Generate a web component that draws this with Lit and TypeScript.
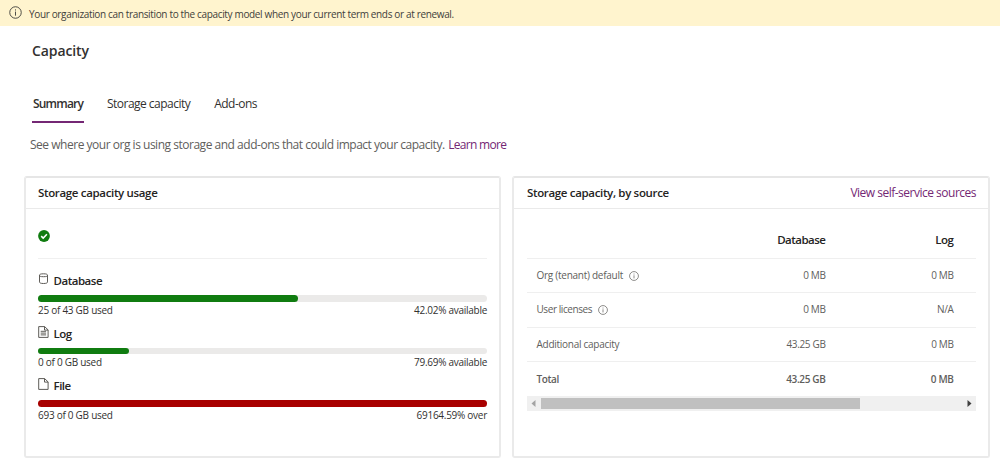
import { LitElement, html, css, svg } from "lit";
import { customElement } from "lit/decorators.js";

interface Usage { name: string; icon: unknown; used: string; state: string; share: number; over?: boolean; }

const databaseIcon = svg`<path d="M1.5 2.3c0-1 1-1.5 4-1.5s4 .5 4 1.5-1 1.4-4 1.4-4-.4-4-1.4v6.6c0 1 1 1.6 4 1.6s4-.6 4-1.6V2.3"/>`;
const fileIcon = svg`<path d="M.7.6h5.9l3.5 3.3v7.5H.7zM6.5.6v3.5h3.6"/>`;
const logIcon = svg`${fileIcon}<path d="M2.7 5.3h5.4M2.7 7.1h5.4M2.7 8.9h5.4"/>`;

const usages: Usage[] = [
  { name: "Database", icon: databaseIcon, used: "25 of 43 GB used", state: "42.02% available", share: 57.98 },
  { name: "Log", icon: logIcon, used: "0 of 0 GB used", state: "79.69% available", share: 20.31 },
  { name: "File", icon: fileIcon, used: "693 of 0 GB used", state: "69164.59% over", share: 100, over: true },
];

const rows = [
  { label: "Org (tenant) default", info: true, database: "0 MB", log: "0 MB" },
  { label: "User licenses", info: true, database: "0 MB", log: "N/A" },
  { label: "Additional capacity", info: false, database: "43.25 GB", log: "0 MB" },
  { label: "Total", info: false, database: "43.25 GB", log: "0 MB", total: true },
];

const info = () => html`<svg viewBox="0 0 14 14" fill="none" stroke="currentColor">
  <circle cx="7" cy="7" r="6.2"/><path d="M7 6v4.4M7 3.6v1.3"/></svg>`;

@customElement("app-root")
export class AppRoot extends LitElement {
  static styles = css`
    :host { display: block; height: 463px; overflow: hidden; background: #fff; color: #323130;
      font: 12px/18px "Open Sans", "Noto Sans", sans-serif; letter-spacing: -0.5px; white-space: nowrap; }
    * { box-sizing: border-box; }
    svg { display: block; flex: none; }
    a { color: #742774; text-decoration: none; }
    .banner { height: 26px; display: flex; align-items: center; gap: 7px; padding: 1px 0 0 9px;
      background: #fff4ce; color: #41403b; font-size: 10px; letter-spacing: -0.345px; }
    .banner svg { width: 13px; height: 13px; margin-top: -2px; }
    h1 { margin: 14px 0 0 32px; font-size: 14px; line-height: 22px; font-weight: 600; letter-spacing: -0.1px; }
    .tabs { display: flex; gap: 22px; height: 29px; margin: 32px 0 0 32px; }
    .tab { padding: 1px 1px 0; letter-spacing: -0.52px; }
    .tab.active { width: 52px; border-bottom: 2px solid #742774; font-weight: 600; letter-spacing: -0.8px; }
    .intro { margin: 13px 0 0 30px; height: 18px; color: #605e5c; letter-spacing: -0.48px; }
    .intro a { letter-spacing: -0.7px; margin-left: 1px; }
    .cards { display: grid; grid-template-columns: 477px 478px; gap: 11px; margin: 22px 0 0 24px; }
    .card { height: 282px; border: 2px solid #eaeaea; border-top-color: #e6e6e6; border-radius: 3px; }
    .head { height: 31px; display: flex; align-items: center; justify-content: space-between;
      padding: 0 12px; border-bottom: 1px solid #eaeaea; }
    .head b { font-size: 11.5px; font-weight: 600; color: #252423; letter-spacing: -0.34px; }
    .card.sources .head { padding-left: 13px; }
    .status { height: 50px; margin: 0 12px; padding-top: 21px; border-bottom: 1px solid #f0f0f0; }
    .status svg { width: 12px; height: 12px; }
    .usages { padding: 13px 12px 0; }
    .usage { height: 52.5px; }
    .name { display: flex; gap: 4.5px; height: 23px; font-size: 11.5px; font-weight: 600; color: #252423; letter-spacing: -0.48px; }
    .name svg { width: 11px; height: 12px; margin-top: 1px; }
    .track { height: 6.5px; border-radius: 4px; background: #ebeae9; }
    .fill { height: 100%; border-radius: 4px; background: #107c10; }
    .fill.over { background: #a80000; }
    .notes { display: flex; justify-content: space-between; font-size: 10px; line-height: 17px; letter-spacing: -0.27px; color: #323130; }
    .source { padding: 0 12px 0 13px; }
    .row { display: grid; grid-template-columns: 160px 129px 128px; padding: 0 21px 1px 9.5px; height: 34.3px;
      align-items: center; border-bottom: 1px solid #efefef; font-size: 10px; color: #605e5c; letter-spacing: -0.27px; }
    .row.header { height: 50px; padding-top: 14px; font-size: 11.5px; font-weight: 600; color: #252423; }
    .row.header .num { letter-spacing: -0.5px; }
    .row.total { border: 0; font-weight: 600; letter-spacing: -0.4px; }
    .label { display: flex; align-items: center; gap: 6px; }
    .row:nth-child(3) .label { letter-spacing: -0.42px; }
    .label svg { width: 10px; height: 10px; margin-top: 1px; }
    .num { text-align: right; letter-spacing: -0.35px; }
    .scroll { display: flex; align-items: center; justify-content: space-between; height: 15px; background: #f0f0f0; padding: 0 4px; }
    .scroll svg { width: 5px; height: 7px; }
    .lane { flex: 1; padding: 0 5px; }
    .thumb { width: 319px; height: 11px; background: #c0c0c0; }
  `;

  render() {
    return html`
      <div class="banner">${info()}<span>Your organization can transition to the capacity model when your current term ends or at renewal.</span></div>
      <h1>Capacity</h1>
      <nav class="tabs">
        <div class="tab active">Summary</div>
        <div class="tab">Storage capacity</div>
        <div class="tab">Add-ons</div>
      </nav>
      <div class="intro">See where your org is using storage and add-ons that could impact your capacity. <a>Learn more</a></div>
      <div class="cards">
        <section class="card">
          <div class="head"><b>Storage capacity usage</b></div>
          <div class="status"><svg viewBox="0 0 12 12"><circle cx="6" cy="6" r="5.9" fill="#107c10"/><path d="M3.2 6.1l2 2 3.7-3.9" fill="none" stroke="#fff" stroke-width="1.5"/></svg></div>
          <div class="usages">${usages.map((u) => html`
            <div class="usage">
              <div class="name"><svg viewBox="0 0 11 12" fill="none" stroke="#55534f" stroke-width=".95">${u.icon}</svg><span>${u.name}</span></div>
              <div class="track"><div class="fill ${u.over ? "over" : ""}" style="width:${u.share}%"></div></div>
              <div class="notes"><span>${u.used}</span><span>${u.state}</span></div>
            </div>`)}
          </div>
        </section>
        <section class="card sources">
          <div class="head"><b>Storage capacity, by source</b><a>View self-service sources</a></div>
          <div class="source">
            <div class="row header"><span></span><span class="num">Database</span><span class="num">Log</span></div>
            ${rows.map((r) => html`<div class="row ${r.total ? "total" : ""}">
              <span class="label"><span>${r.label}</span>${r.info ? info() : ""}</span>
              <span class="num">${r.database}</span><span class="num">${r.log}</span></div>`)}
            <div class="scroll">
              <svg viewBox="0 0 5 7"><path d="M4.5 0v7L.5 3.5z" fill="#a3a3a3"/></svg>
              <div class="lane"><div class="thumb"></div></div>
              <svg viewBox="0 0 5 7"><path d="M.5 0v7l4-3.5z" fill="#404040"/></svg>
            </div>
          </div>
        </section>
      </div>`;
  }
}
